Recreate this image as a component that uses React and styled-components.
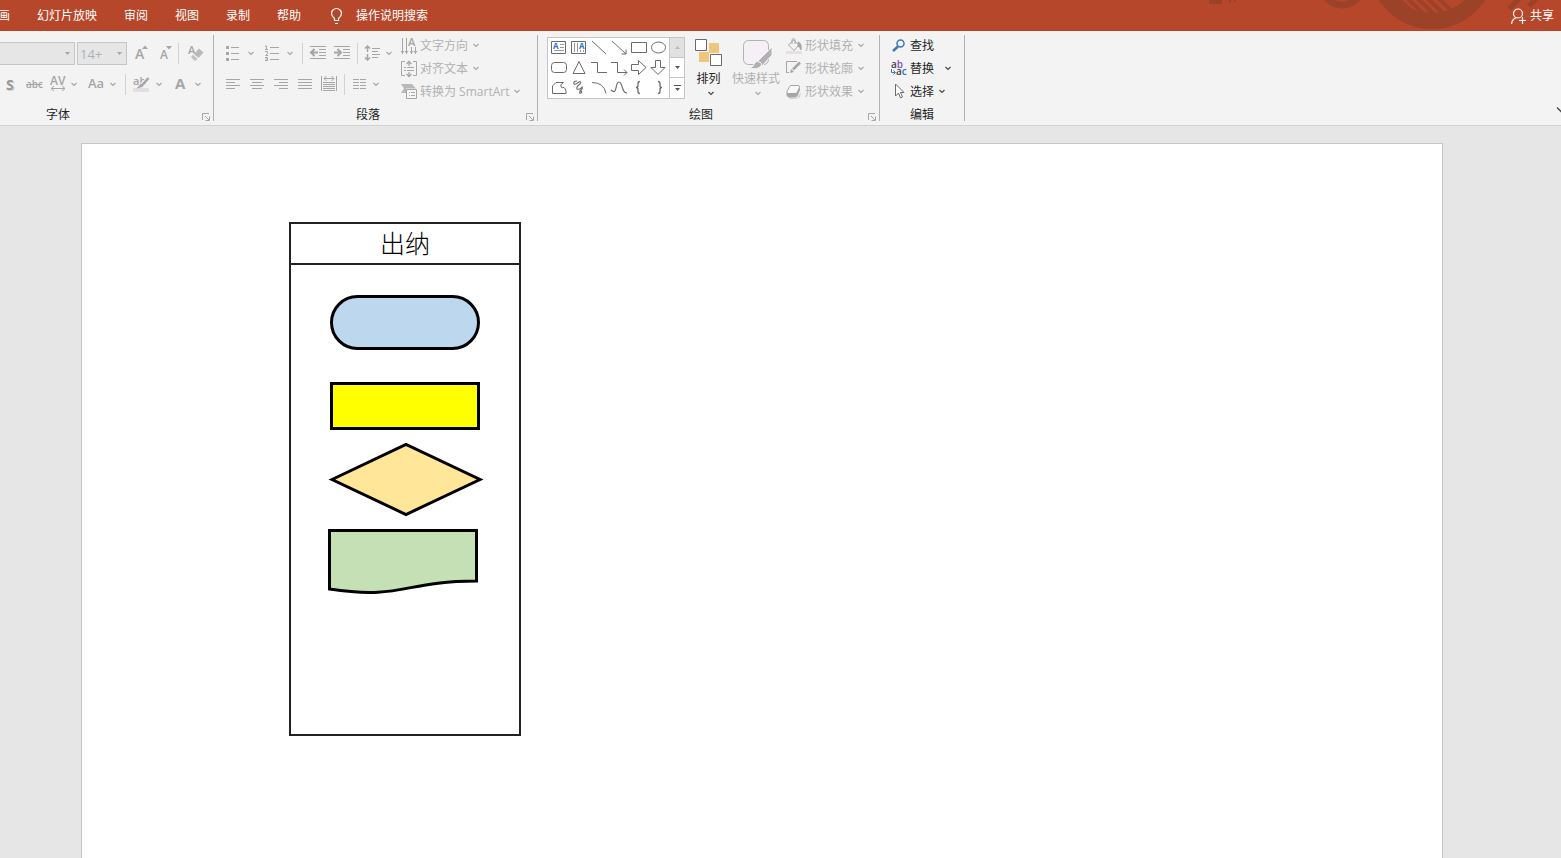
import React from "react";
import styled, { createGlobalStyle } from "styled-components";

const GREY = "#a6a6a6";
const DARK = "#6b6b6b";

const GlobalStyle = createGlobalStyle`
  * {
    box-sizing: border-box;
  }
  body {
    margin: 0;
    font-family: "Open Sans", "Noto Sans CJK SC", sans-serif;
    font-size: 12px;
    line-height: 16px;
    color: #262626;
  }
  button, input, select {
    font: inherit;
    color: inherit;
  }
  svg {
    display: block;
    flex: none;
    overflow: visible;
  }
`;

const Page = styled.div`
  display: flex;
  flex-direction: column;
  height: 100vh;
  overflow: hidden;
  background-color: #e6e6e6;
`;

/* title bar */
const TitleBar = styled.header`
  position: relative;
  display: flex;
  align-items: center;
  flex: none;
  height: 31px;
  background-color: #b7472a;
  color: white;
  overflow: hidden;
`;
const Ornament = styled.svg`
  position: absolute;
  top: 0;
  right: 0;
`;
const Tabs = styled.nav`
  display: flex;
  gap: 27px;
  margin-left: -2px;
`;
const Tab = styled.button`
  padding: 0;
  border: none;
  background: none;
  white-space: nowrap;
`;
const Search = styled.label`
  display: flex;
  align-items: center;
  gap: 12px;
  margin-left: 29px;
`;
const SearchInput = styled.input`
  width: 160px;
  padding: 0;
  border: none;
  outline: none;
  background: none;

  &::placeholder {
    color: white;
    opacity: 1;
  }
`;
const ShareButton = styled.button`
  position: relative;
  display: flex;
  align-items: center;
  gap: 3px;
  margin-left: auto;
  padding: 0 7px 0 0;
  border: none;
  background: none;
`;

/* ribbon */
const Ribbon = styled.section`
  display: flex;
  flex: none;
  padding: 4px 0;
  background-color: #f3f3f3;
  border-bottom: 1px solid #d2d2d2;
  overflow: hidden;
`;
const Group = styled.div`
  display: flex;
  flex: none;
  flex-direction: column;
  justify-content: space-between;
  width: ${(props) => props.$width}px;
  height: 86px;
  margin-left: ${(props) => props.$shift || 0}px;
  border-right: 1px solid #b1b1b1;
`;
const GroupBody = styled.div`
  display: flex;
  height: 67px;
`;
const GroupFooter = styled.div`
  display: flex;
  align-items: flex-end;
  padding-right: ${(props) => (props.$launcher ? 3 : 0)}px;
`;
const GroupTitle = styled.span`
  flex: 1;
  line-height: 12px;
  text-align: center;
`;
const Launcher = styled.button`
  margin-left: 4px;
  padding: 0;
  border: none;
  background: none;
`;
const ToolColumn = styled.div`
  display: flex;
  flex-direction: column;
  gap: 8px;
  width: ${(props) => props.$width}px;
  padding-top: 7px;
`;
const ToolRow = styled.div`
  display: flex;
  align-items: center;
  height: 23px;
  padding-left: ${(props) => props.$start || 0}px;
`;
const Tool = styled.button`
  display: flex;
  flex: none;
  align-items: center;
  justify-content: center;
  width: ${(props) => props.$width || 24}px;
  height: 23px;
  padding: 0 0 2px;
  border: none;
  background: none;
  color: ${GREY};
`;
const CaretButton = styled.button`
  flex: none;
  width: 8px;
  margin-right: 3px;
  padding: 0 0 2px;
  border: none;
  background: none;
`;
const Separator = styled.span`
  flex: none;
  width: 1px;
  height: 21px;
  margin: 0 ${(props) => props.$after || 1}px 0 ${(props) => props.$before || 1}px;
  background-color: #d2d2d2;
`;
const Combo = styled.span`
  position: relative;
  flex: none;
  width: ${(props) => props.$width}px;
  height: 23px;
  margin-right: 2px;
`;
const ComboSelect = styled.select`
  appearance: none;
  width: 100%;
  height: 23px;
  padding: 0 2px;
  border: 1px solid #c6c6c6;
  border-radius: 0;
  background-color: #e6e6e6;
  font-size: 13px;
  opacity: 1;

  &:disabled {
    color: #a9b2bb;
  }
`;
const ComboArrow = styled.svg`
  position: absolute;
  top: 10px;
  right: 5px;
  pointer-events: none;
`;
const CommandList = styled.div`
  display: flex;
  flex-direction: column;
  align-items: flex-start;
  gap: 2px;
  padding-left: ${(props) => props.$start || 0}px;
`;
const Command = styled.button`
  display: flex;
  align-items: center;
  gap: 3px;
  height: 21px;
  padding: 0;
  border: none;
  background: none;
  color: ${(props) => (props.$off ? "#b1b1b1" : "#262626")};
  white-space: nowrap;
`;
const CommandCaret = styled.span`
  margin-left: ${(props) => props.$gap || 1}px;
  padding-bottom: 1px;
`;
const BigButton = styled.button`
  display: flex;
  flex-direction: column;
  align-items: center;
  width: ${(props) => props.$width}px;
  padding: 4px 0 0;
  border: none;
  background: none;
  color: ${(props) => (props.$off ? "#b1b1b1" : "#262626")};
  white-space: nowrap;
`;
const BigIcon = styled.span`
  height: 32px;
`;
const BigCaret = styled.span`
  margin: 2px 0 0 4px;
`;

/* shape gallery */
const Gallery = styled.div`
  display: flex;
  height: 62px;
  margin: 2px 0 0 9px;
  border: 1px solid #c6c6c6;
  background-color: white;
`;
const GalleryGrid = styled.div`
  display: grid;
  grid-template-columns: repeat(6, 20px);
  grid-template-rows: repeat(3, 20px);
  padding-right: 1px;
`;
const GalleryCell = styled.button`
  display: flex;
  align-items: center;
  justify-content: center;
  padding: 0 0 2px 1px;
  border: none;
  background: none;
`;
const GalleryScroll = styled.div`
  display: grid;
  grid-template-rows: repeat(3, 20px);
  width: 15px;
  border-left: 1px solid #c6c6c6;
`;
const ScrollButton = styled.button`
  display: flex;
  align-items: center;
  justify-content: center;
  padding: 0;
  border: none;
  border-bottom: ${(props) => (props.$last ? "none" : "1px solid #c6c6c6")};
  background-color: ${(props) => (props.disabled ? "#e1e1e1" : "white")};
`;
const CollapseButton = styled.button`
  align-self: flex-end;
  width: 4px;
  height: 14px;
  margin-left: auto;
  padding: 0 0 9px;
  border: none;
  background: none;
`;

/* slide */
const Workspace = styled.main`
  display: flex;
  flex: 1;
  padding: 17px 118px 0 81px;
`;
const Slide = styled.div`
  position: relative;
  flex: 1;
  border: 1px solid #c6c6c6;
  border-bottom: none;
  background-color: white;
`;
const Lane = styled.section`
  position: absolute;
  top: 78px;
  left: 207px;
  width: 232px;
  height: 514px;
  border: 2px solid #222;
`;
const LaneTitle = styled.h2`
  height: 41px;
  margin: 0;
  border-bottom: 2px solid #222;
  color: black;
  font-family: "Noto Sans CJK SC", sans-serif;
  font-size: 25px;
  font-weight: 300;
  line-height: 37px;
  text-align: center;
`;
const Node = styled.svg`
  position: absolute;
  top: ${(props) => props.$top}px;
  left: ${(props) => props.$left}px;
  stroke: black;
  stroke-width: 3px;
`;

const Icon = ({ w = 16, h = 16, color = GREY, children }) => (
  <svg width={w} height={h} viewBox={`0 0 ${w} ${h}`} fill="none" stroke={color} aria-hidden="true">
    {children}
  </svg>
);

const Chevron = ({ color = GREY }) => (
  <Icon w={8} h={8} color={color}>
    <path d="M1.500 3 4 5.500 6.500 3" strokeWidth="1.100" />
  </Icon>
);

const Caret = ({ label }) => (
  <CaretButton aria-label={label}>
    <Chevron />
  </CaretButton>
);

const Glyph = ({ x, y, size, color = GREY, weight = 600, children }) => (
  <text x={x} y={y} fontSize={size} fontWeight={weight} fill={color} stroke="none">
    {children}
  </text>
);

const Lines = ({ w = 16, rows }) => (
  <Icon w={w}>
    {rows.map(([x1, x2, y]) => (
      <path key={`${x1}-${y}`} d={`M${x1} ${y}.5H${x2}`} />
    ))}
  </Icon>
);

const LauncherIcon = () => (
  <Icon w={8} h={8}>
    <path d="M.5 7V.5H7M3 3l4 4M7.500 3.500v4h-4" />
  </Icon>
);

const FontGroup = () => (
  <Group $width={296} $shift={-82}>
    <GroupBody>
      <ToolColumn $width={295}>
        <ToolRow $start={20}>
          <Combo $width={137}>
            <ComboSelect aria-label="字体" disabled>
              <option></option>
            </ComboSelect>
            <ComboArrow width="5" height="3" fill={GREY}>
              <path d="M0 0h5L2.500 3z" />
            </ComboArrow>
          </Combo>
          <Combo $width={50}>
            <ComboSelect aria-label="字号" disabled>
              <option>14+</option>
            </ComboSelect>
            <ComboArrow width="5" height="3" fill={GREY}>
              <path d="M0 0h5L2.500 3z" />
            </ComboArrow>
          </Combo>
          <Tool aria-label="增大字号">
            <Icon>
              <Glyph x={2} y={14} size={14}>A</Glyph>
              <path d="M9 4h6l-3-3.500z" fill={GREY} stroke="none" />
            </Icon>
          </Tool>
          <Tool aria-label="减小字号">
            <Icon>
              <Glyph x={3} y={14} size={12}>A</Glyph>
              <path d="M9 1h6l-3 3.500z" fill={GREY} stroke="none" />
            </Icon>
          </Tool>
          <Separator $after={4} />
          <Tool aria-label="清除格式">
            <Icon>
              <Glyph x={1} y={9} size={11}>A</Glyph>
              <path d="m7 9 5-5.500 4.500 4-5 5.500z" fill="#b9b9b9" stroke="none" />
              <path d="M6 9.500 10.500 14 9 15.500H7L4 12z" fill="#c2c2c2" stroke="none" />
            </Icon>
          </Tool>
        </ToolRow>
        <ToolRow $start={80}>
          <Tool aria-label="文字阴影">
            <Icon>
              <Glyph x={5} y={15} size={15} weight={700} color="#d6d6d6">S</Glyph>
              <Glyph x={4} y={14} size={14} weight={700} color="#999">S</Glyph>
            </Icon>
          </Tool>
          <Tool aria-label="删除线">
            <Icon w={18}>
              <Glyph x={1} y={12} size={10}>abc</Glyph>
              <path d="M1 8.500h16" />
            </Icon>
          </Tool>
          <Tool aria-label="字符间距">
            <Icon>
              <Glyph x={0} y={9} size={12}>AV</Glyph>
              <path d="M1 12.500h14M4 10l-3 2.500L4 15M12 10l3 2.500L12 15" />
            </Icon>
          </Tool>
          <Caret label="字符间距选项" />
          <Tool $width={28} aria-label="更改大小写">
            <Icon>
              <Glyph x={1} y={12} size={13}>Aa</Glyph>
            </Icon>
          </Tool>
          <Caret label="大小写选项" />
          <Separator $before={5} />
          <Tool $width={28} aria-label="文本突出显示颜色">
            <Icon>
              <path d="M0 14h16" stroke="#e3dde5" strokeWidth="4" />
              <Glyph x={0} y={9} size={11}>ab</Glyph>
              <path d="M15 2 9 9" stroke="#f3f3f3" strokeWidth="4" />
              <path d="m15.500 2-7 8" strokeWidth="2.500" />
              <path d="m7.500 8-4 4.500 6-1.500z" fill={GREY} stroke="none" />
            </Icon>
          </Tool>
          <Caret label="突出显示选项" />
          <Tool $width={28} aria-label="字体颜色">
            <Icon>
              <Glyph x={3} y={13} size={15} weight={700}>A</Glyph>
            </Icon>
          </Tool>
          <Caret label="字体颜色选项" />
        </ToolRow>
      </ToolColumn>
    </GroupBody>
    <GroupFooter $launcher>
      <GroupTitle>字体</GroupTitle>
      <Launcher aria-label="字体设置">
        <LauncherIcon />
      </Launcher>
    </GroupFooter>
  </Group>
);

const ParagraphGroup = () => (
  <Group $width={324}>
    <GroupBody>
      <ToolColumn $width={187}>
        <ToolRow $start={5}>
          <Tool $width={28} aria-label="项目符号">
            <Icon>
              <path d="M6 2.500h8M6 8.500h8M6 14.500h8" />
              <path d="M1 2.500h3M1 8.500h3M1 14.500h3" strokeWidth="3" />
            </Icon>
          </Tool>
          <Caret label="项目符号选项" />
          <Tool $width={28} aria-label="编号">
            <Icon>
              <path d="M6 2.500h9M6 8.500h9M6 14.500h9" />
              <path d="M1 1h1.500v3.500M1 4.500h3M1 6.500h2.500v2L1.500 10.500h2.500M1 12.500h2.500v3H1M1.500 14h2" />
            </Icon>
          </Tool>
          <Caret label="编号选项" />
          <Separator $before={5} $after={3} />
          <Tool aria-label="减少缩进">
            <Icon>
              <path d="M0 1.500h16M9 4.500h7M9 7.500h7M9 10.500h7M0 13.500h16" />
              <path d="M1 7.500h7M4.500 4 1 7.500 4.500 11" strokeWidth="2" />
            </Icon>
          </Tool>
          <Tool aria-label="增加缩进">
            <Icon>
              <path d="M0 1.500h16M9 4.500h7M9 7.500h7M9 10.500h7M0 13.500h16" />
              <path d="M0 7.500h7M3.500 4 7 7.500 3.500 11" strokeWidth="2" />
            </Icon>
          </Tool>
          <Separator $before={3} $after={3} />
          <Tool aria-label="行距">
            <Icon>
              <path d="M7 3.500h8M7 6.500h6M7 9.500h8M7 12.500h6" />
              <path d="M2.500 1v6M2.500 9v6M0 3.500 2.500 1 5 3.500M0 12.500 2.500 15 5 12.500" strokeWidth="1.500" />
            </Icon>
          </Tool>
          <Caret label="行距选项" />
        </ToolRow>
        <ToolRow $start={7}>
          <Tool aria-label="左对齐">
            <Lines rows={[[1, 15, 3], [1, 10, 6], [1, 15, 9], [1, 10, 12]]} />
          </Tool>
          <Tool aria-label="居中">
            <Lines rows={[[1, 15, 3], [3, 13, 6], [1, 15, 9], [3, 13, 12]]} />
          </Tool>
          <Tool aria-label="右对齐">
            <Lines rows={[[1, 15, 3], [6, 15, 6], [1, 15, 9], [6, 15, 12]]} />
          </Tool>
          <Tool aria-label="两端对齐">
            <Lines rows={[[1, 15, 3], [1, 15, 6], [1, 15, 9], [1, 15, 12]]} />
          </Tool>
          <Tool aria-label="分散对齐">
            <Icon>
              <path d="M.5 0v15M15.500 0v15M2 6.500h12M2 8.500h12M2 10.500h12M2 12.500h12M2 14.500h12" />
              <path d="M3 2.500h10M5.500 0 3 2.500 5.500 5M10.500 0 13 2.500 10.500 5" />
            </Icon>
          </Tool>
          <Separator $before={3} $after={3} />
          <Tool aria-label="分栏">
            <Lines
              rows={[
                [1, 7, 3], [8, 14, 3], [1, 7, 6], [8, 14, 6],
                [1, 7, 9], [8, 14, 9], [1, 7, 12], [8, 14, 12],
              ]}
            />
          </Tool>
          <Caret label="分栏选项" />
        </ToolRow>
      </ToolColumn>
      <CommandList>
        <Command $off>
          <Icon>
            <path d="M1.500 0v16M5.500 0v16M10.500 9v7M14.500 9v7M0 13l1.500 2L3 13M4 13l1.500 2L7 13M9 13l1.500 2 1.500-2M13 13l1.500 2 1.500-2" />
            <Glyph x={7} y={8} size={11}>A</Glyph>
          </Icon>
          文字方向
          <CommandCaret><Chevron /></CommandCaret>
        </Command>
        <Command $off>
          <Icon>
            <path d="M4 .5H.5v14H4M12 .5h3.500v14H12M3 6.500h2M6 6.500h7M3 9.500h2M6 9.500h7" />
            <path d="M8 0v5M5.500 3 8 .5 10.500 3M8 11v5M5.500 13 8 15.500l2.500-2.500" strokeWidth="1.300" />
          </Icon>
          对齐文本
          <CommandCaret><Chevron /></CommandCaret>
        </Command>
        <Command $off>
          <Icon>
            <path d="M0 0h11l4 4.500H5V9H0l3-4.500z" fill="#b9b9b9" stroke="none" />
            <path d="M5.500 5.500h10v9h-10z" fill="#f8f5f8" />
            <path d="M8 8.500h1M10 8.500h4M8 11.500h1M10 11.500h4" />
          </Icon>
          转换为 SmartArt
          <CommandCaret><Chevron /></CommandCaret>
        </Command>
      </CommandList>
    </GroupBody>
    <GroupFooter $launcher>
      <GroupTitle>段落</GroupTitle>
      <Launcher aria-label="段落设置">
        <LauncherIcon />
      </Launcher>
    </GroupFooter>
  </Group>
);

const shapes = [
  {
    name: "文本框",
    art: (
      <>
        <path d="M.5 2.500h14v12H.5z" />
        <path d="M9 5.500h4M9 8.500h4M3 11.500h10" stroke="#999" />
        <Glyph x={2} y={10} size={8} weight={700} color="#2e74b5">A</Glyph>
      </>
    ),
  },
  {
    name: "竖排文本框",
    art: (
      <>
        <path d="M.5 2.500h14v12H.5z" />
        <path d="M3.500 4v9M6.500 4v9M9.500 11v2M12.500 11v2" stroke="#999" />
        <Glyph x={8} y={10} size={8} weight={700} color="#2e74b5">A</Glyph>
      </>
    ),
  },
  { name: "直线", art: <path d="m1 2 14 13" /> },
  { name: "箭头", art: <path d="m1 2 14 13M15 10.500V15h-4.500" /> },
  { name: "矩形", art: <path d="M.5 3.500h15v10H.5z" /> },
  { name: "椭圆", art: <ellipse cx="7.500" cy="8.500" rx="7" ry="5.500" /> },
  { name: "圆角矩形", art: <rect x=".5" y="3.500" width="15" height="10" rx="3" /> },
  { name: "等腰三角形", art: <path d="m8 2.500 6 12H2z" /> },
  { name: "肘形连接符", art: <path d="M0 3.500h6.500v10H16" /> },
  { name: "肘形箭头", art: <path d="M0 3.500h6.500v10H16M13 10.500l3 3-3 3" /> },
  { name: "右箭头", art: <path d="M.5 5.500h7v-4l7.500 7-7.500 7v-4h-7z" /> },
  { name: "下箭头", art: <path d="M4.500 1.500h5v7H14l-7 7-7-7h4.500z" /> },
  { name: "任意多边形", art: <path d="M1.500 14.500V7L5 3.500h7.500q-4 2-2.500 4.500 1 1 3 .5 2 1 2 4v2z" /> },
  { name: "自由曲线", art: <path d="M6 2Q2 2 3 5q1 1 5-2 3-1 1 2-4 3-3 5 3 1 5-2 1 2-2 4-1 3 1 2 2-2-1-2" strokeWidth="1.100" /> },
  { name: "弧形", art: <path d="M1 3.500q12 0 14 11" /> },
  { name: "曲线", art: <path d="M0 11q4 4 5-2 1-6 3-6t3.500 6q1.500 5 4.500 5" strokeWidth="1.200" /> },
  { name: "左大括号", art: <path d="M9 2.500q-2 0-2 2v2q0 2-2 2 2 0 2 2v2q0 2 2 2" strokeWidth="1.300" /> },
  { name: "右大括号", art: <path d="M7 2.500q2 0 2 2v2q0 2 2 2-2 0-2 2v2q0 2-2 2" strokeWidth="1.300" /> },
];

const DrawingGroup = () => (
  <Group $width={342}>
    <GroupBody>
      <Gallery>
        <GalleryGrid>
          {shapes.map((shape) => (
            <GalleryCell key={shape.name} aria-label={shape.name}>
              <Icon color={DARK}>{shape.art}</Icon>
            </GalleryCell>
          ))}
        </GalleryGrid>
        <GalleryScroll>
          <ScrollButton disabled aria-label="上一行">
            <Icon w={5} h={3}>
              <path d="M0 3h5L2.500 0z" fill="#b9b9b9" stroke="none" />
            </Icon>
          </ScrollButton>
          <ScrollButton aria-label="下一行">
            <Icon w={5} h={3}>
              <path d="M0 0h5L2.500 3z" fill="#555" stroke="none" />
            </Icon>
          </ScrollButton>
          <ScrollButton $last aria-label="更多形状">
            <Icon w={7} h={8} color="#555">
              <path d="M0 1.500h7" />
              <path d="M1 4h5L3.500 7z" fill="#555" stroke="none" />
            </Icon>
          </ScrollButton>
        </GalleryScroll>
      </Gallery>
      <BigButton $width={47}>
        <BigIcon>
          <Icon w={28} h={28} color={DARK}>
            <path d="M14 4h10v10H14zM4 13h10v10H4z" fill="#eec77b" stroke="none" />
            <path d="M.5.500h11v11H.5zM15.500 15.500h11v11h-11z" fill="white" />
          </Icon>
        </BigIcon>
        排列
        <BigCaret><Chevron color="#444" /></BigCaret>
      </BigButton>
      <BigButton $off $width={48}>
        <BigIcon>
          <Icon w={28} h={32} color="#b1b1b1">
            <rect x="1.500" y="1.500" width="25" height="24" rx="5" fill="#f5f0f6" />
            <path d="M30 8v8L20 27l-5-4z" fill="#b1b1b1" stroke="#f3f3f3" />
            <path d="M7 29q5-1 5-4 2-4 6-2 3 2 1 4-3 4-12 2z" fill="#b1b1b1" stroke="#f3f3f3" />
          </Icon>
        </BigIcon>
        快速样式
        <BigCaret><Chevron /></BigCaret>
      </BigButton>
      <CommandList $start={6}>
        <Command $off>
          <Icon>
            <path d="M0 14.500h16" stroke="#e6dfe3" strokeWidth="3" />
            <path d="m2.500 7 5-5 5.500 5-5 5.500zM6 6V1.500Q7.500-.5 9 1.500V6" />
            <path d="M12 4q4 1 3 8-1-3-3-4z" fill={GREY} />
          </Icon>
          形状填充
          <CommandCaret><Chevron /></CommandCaret>
        </Command>
        <Command $off>
          <Icon>
            <path d="M11 .5H.5v11H3" />
            <path d="m14 1.500-7 7" strokeWidth="2.500" />
            <path d="m5 8-1 4 4-1z" fill={GREY} stroke="none" />
          </Icon>
          形状轮廓
          <CommandCaret><Chevron /></CommandCaret>
        </Command>
        <Command $off>
          <Icon>
            <path d="M2 12q3 3 9 2l4-6-1 5-4 2H4z" fill="#d0d0d0" stroke="none" />
            <path d="M1 9v2q.5 2 2 2h6q1.500 0 2-1l2.500-6V3z" fill={GREY} />
            <path d="M5 1.500h7q2 0 1.500 2L11 8.500q-.5 1-2 1H2q-1.500 0-1-2l2.500-5q.5-1 1.500-1z" fill="#f8f8f8" />
          </Icon>
          形状效果
          <CommandCaret><Chevron /></CommandCaret>
        </Command>
      </CommandList>
    </GroupBody>
    <GroupFooter $launcher>
      <GroupTitle>绘图</GroupTitle>
      <Launcher aria-label="形状设置">
        <LauncherIcon />
      </Launcher>
    </GroupFooter>
  </Group>
);

const EditingGroup = () => (
  <Group $width={85}>
    <GroupBody>
      <CommandList $start={11}>
        <Command>
          <Icon color="#3f78b5">
            <circle cx="9.500" cy="5.500" r="3.500" strokeWidth="1.500" />
            <path d="m7 8.500-5 4.500" strokeWidth="2.500" />
          </Icon>
          查找
        </Command>
        <Command>
          <Icon color="#3f78b5">
            <Glyph x={0} y={7} size={10}>
              <tspan fill="#444">a</tspan>
              <tspan fill="#8a4fb5">b</tspan>
            </Glyph>
            <Glyph x={5} y={14} size={10}>
              <tspan fill="#444">a</tspan>
              <tspan fill="#2e74b5">c</tspan>
            </Glyph>
            <path d="M.5 8v3.500H4M2.500 9.500l2 2-2 2" />
          </Icon>
          替换
          <CommandCaret $gap={7}><Chevron color="#444" /></CommandCaret>
        </Command>
        <Command>
          <Icon color={DARK}>
            <path d="M4.500 0v12l3-3 2 5 2-1-2-4.500H13z" fill="white" />
          </Icon>
          选择
          <CommandCaret><Chevron color="#444" /></CommandCaret>
        </Command>
      </CommandList>
    </GroupBody>
    <GroupFooter>
      <GroupTitle>编辑</GroupTitle>
    </GroupFooter>
  </Group>
);

const App = () => {
  return (
    <Page>
      <GlobalStyle />
      <TitleBar>
        <Ornament width="361" height="31" viewBox="1200 0 361 31" fill="none" stroke="#9b4229">
          <path d="M1209 0h13v4h-13zM1229 0h2v3h-2zM1234 0h2v2h-2z" fill="#9b4229" stroke="none" />
          <circle cx="1342" cy="-15" r="20" strokeWidth="7" />
          <circle cx="1432" cy="-34" r="55" strokeWidth="16" />
          <path
            d="m1397-2 16 14M1407-2l18 17M1417-2l18 17M1427-2l17 16M1438-2l14 13"
            strokeWidth="4"
          />
          <path d="m1509 9 10-10M1529 6l8-8" strokeWidth="5" />
        </Ornament>
        <Tabs>
          <Tab>画</Tab>
          <Tab>幻灯片放映</Tab>
          <Tab>审阅</Tab>
          <Tab>视图</Tab>
          <Tab>录制</Tab>
          <Tab>帮助</Tab>
        </Tabs>
        <Search>
          <Icon w={14} h={16} color="white">
            <path d="M4.500 12.500v-2Q1.500 8 1.500 5.500a5 5 0 0 1 10 0q0 2.500-3 5v2zM5 15.500h3" strokeWidth="1.200" />
          </Icon>
          <SearchInput placeholder="操作说明搜索" aria-label="操作说明搜索" />
        </Search>
        <ShareButton>
          <Icon color="white">
            <circle cx="7" cy="5.500" r="4.500" strokeWidth="1.200" />
            <path d="M.5 16q.5-5 5-6.500M8 12.500h7M11.500 9v7" strokeWidth="1.200" />
          </Icon>
          共享
        </ShareButton>
      </TitleBar>
      <Ribbon>
        <FontGroup />
        <ParagraphGroup />
        <DrawingGroup />
        <EditingGroup />
        <CollapseButton aria-label="折叠功能区">
          <Icon w={9} h={5} color="#444">
            <path d="m0 .5 4 4 4-4" strokeWidth="1.300" />
          </Icon>
        </CollapseButton>
      </Ribbon>
      <Workspace>
        <Slide>
          <Lane>
            <LaneTitle>出纳</LaneTitle>
          </Lane>
          <Node $top={151} $left={248} width="150" height="55">
            <rect x="1.500" y="1.500" width="147" height="52" rx="26" fill="#bdd7ee" />
          </Node>
          <Node $top={238} $left={248} width="150" height="48">
            <rect x="1.500" y="1.500" width="147" height="45" fill="#ffff00" />
          </Node>
          <Node $top={299} $left={246} width="156" height="74">
            <path d="m4 36.500 74-35 74 35-74 35z" fill="#ffe699" />
          </Node>
          <Node $top={385} $left={246} width="150" height="66">
            <path d="M1.500 1.500h147v50.500C75 52 75 71 1.500 60z" fill="#c5e0b4" />
          </Node>
        </Slide>
      </Workspace>
    </Page>
  );
};

export default App;
